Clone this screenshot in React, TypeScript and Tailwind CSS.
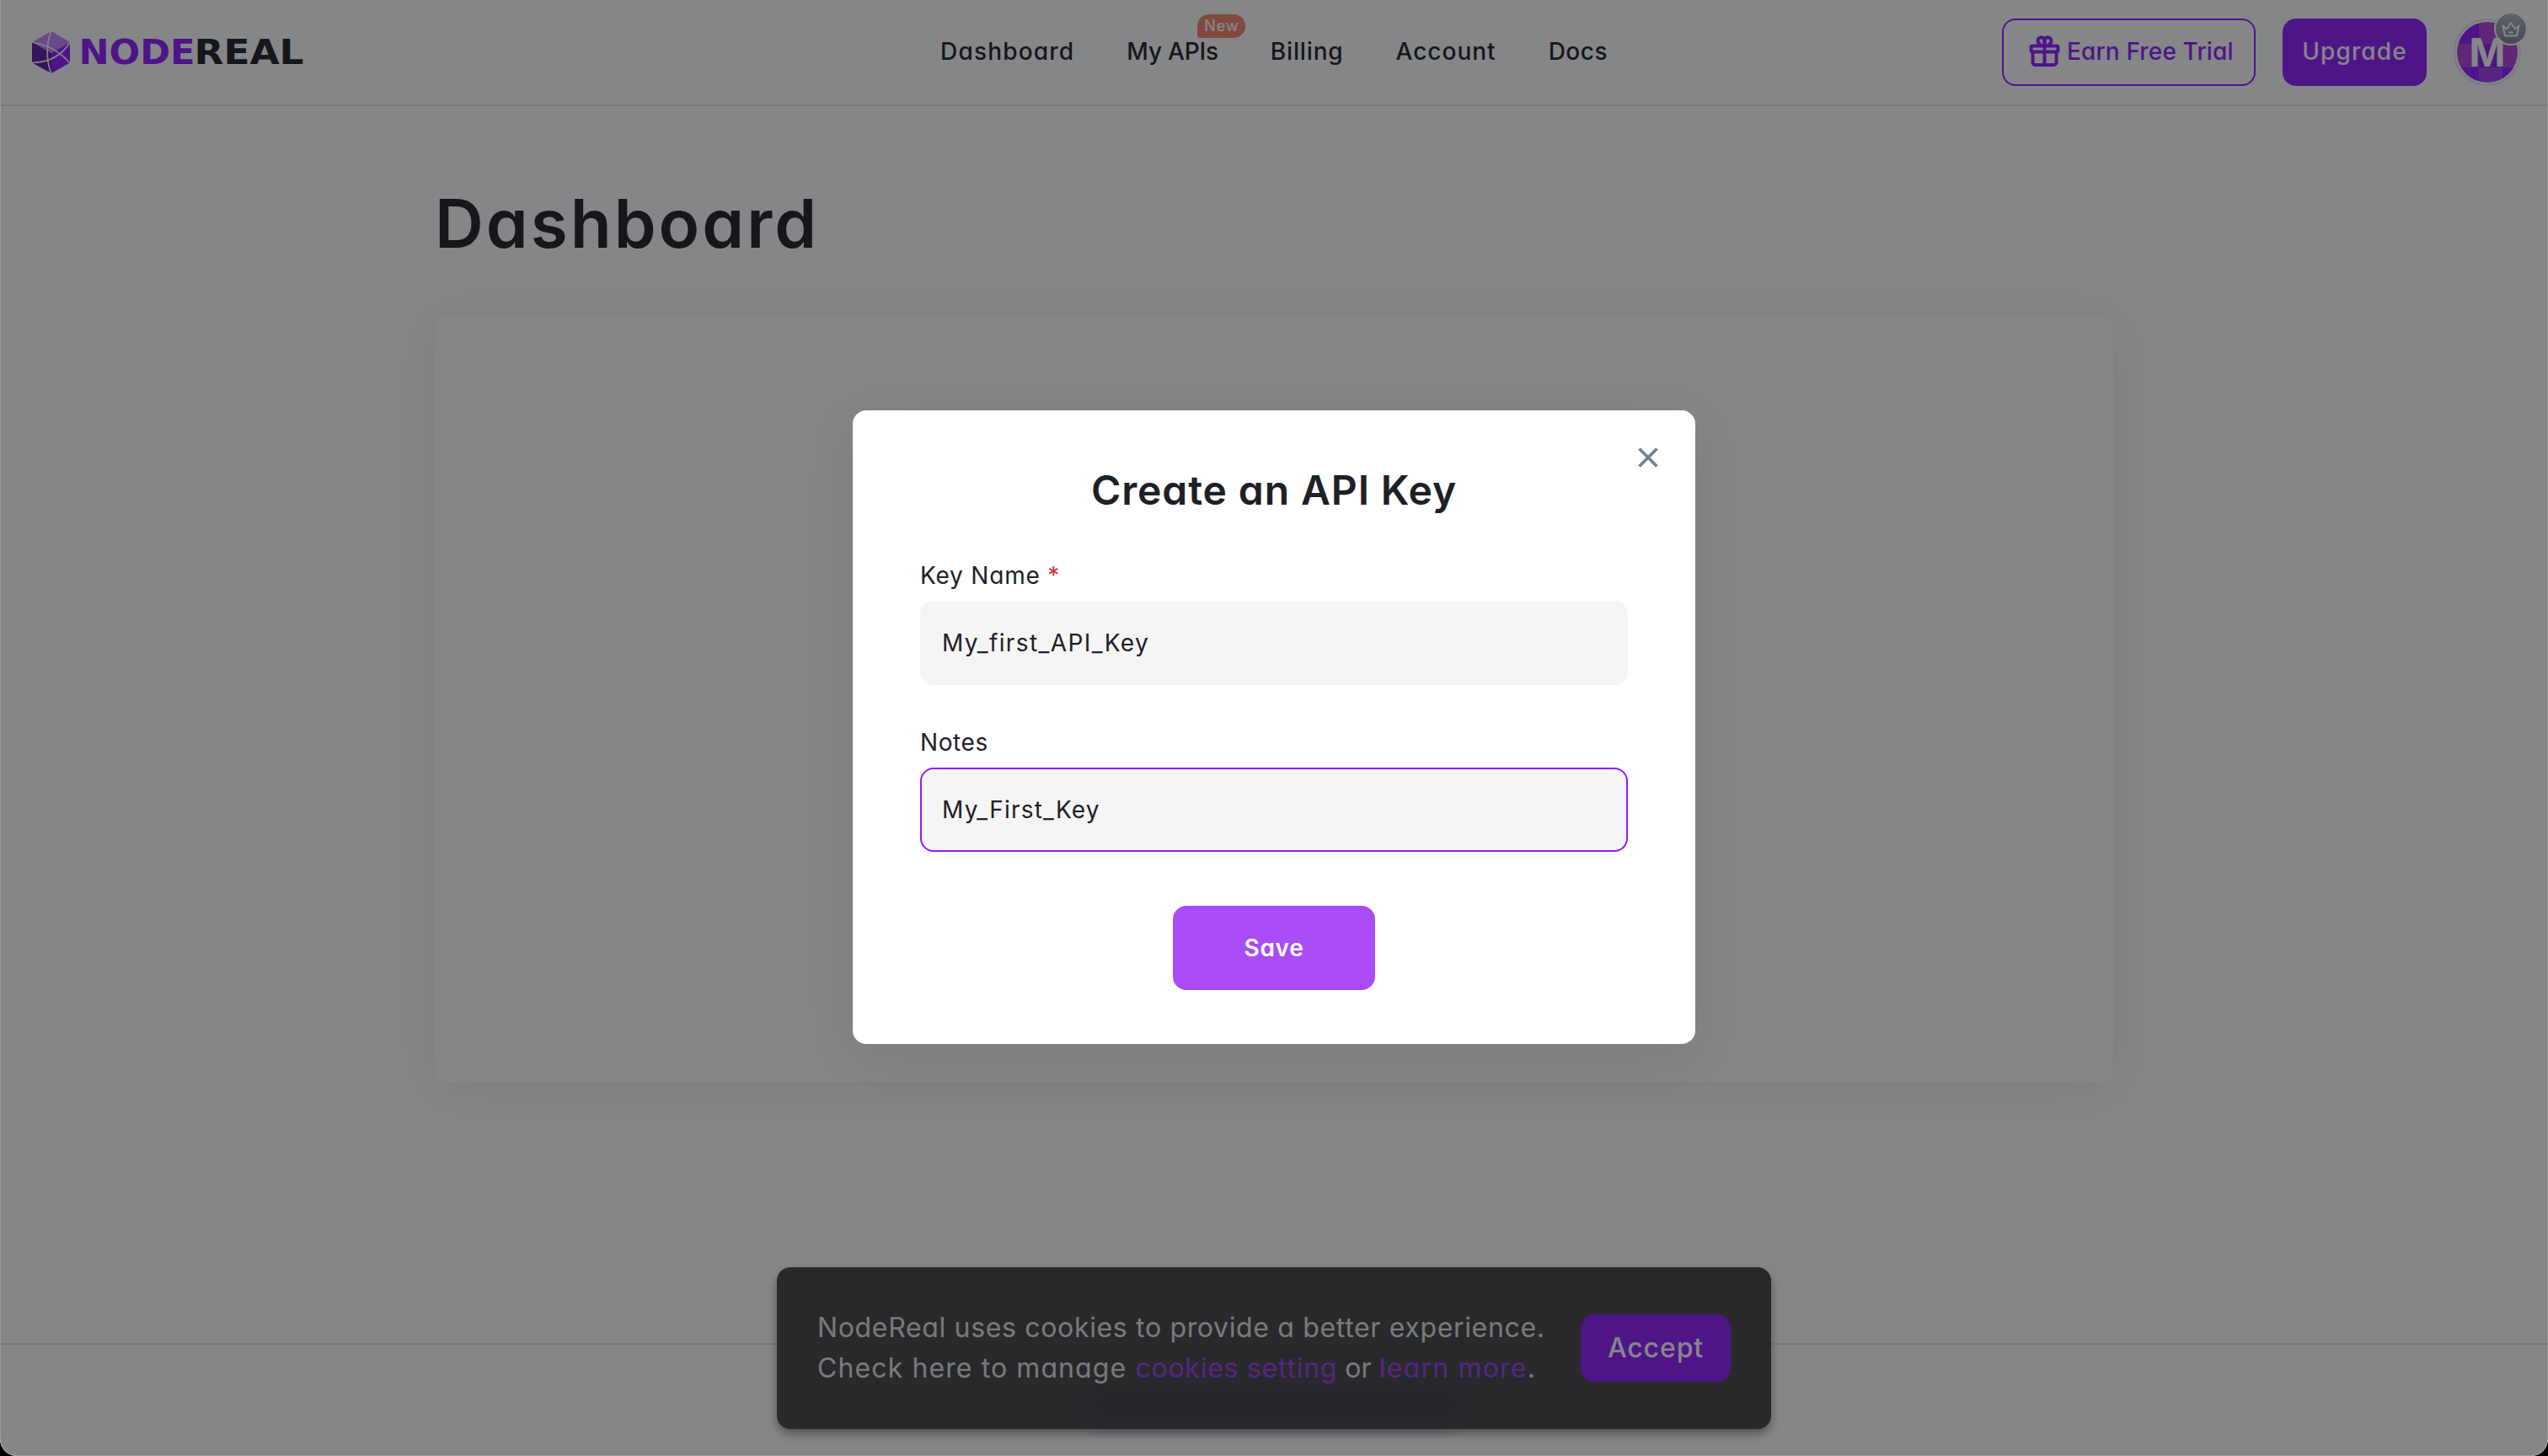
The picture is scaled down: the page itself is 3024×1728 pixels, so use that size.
import React, { useState } from "react";

const navItems = [
  { label: "Dashboard", tracking: "tracking-[1.2px]" },
  { label: "My APIs", tracking: "tracking-[-0.2px]", isNew: true },
  { label: "Billing", tracking: "tracking-[0.85px]" },
  { label: "Account", tracking: "tracking-[1px]" },
  { label: "Docs", tracking: "tracking-[0.5px]" },
];

const tiles = [
  "bg-[#901aff]", "bg-[#b040dd]", "bg-[#901aff]",
  "bg-[#b040dd]", "bg-[#901aff]", "bg-[#b040dd]",
  "bg-[#901aff]", "bg-[#a23ef5]", "bg-[#901aff]",
];

const Logo: React.FC = () => (
  <a href="#" className="ml-[5px] flex items-center">
    <svg className="w-[326px] h-[50px]" viewBox="0 0 326 50" fill="none">
      <path d="M24 0L46 13L24 26L1 13Z" fill="#cd82fb" />
      <path d="M1 13L24 26V50L1 37.5Z" fill="#5f1ba3" />
      <path d="M46 13L24 26V50L46 37.5Z" fill="#901aff" />
      <path d="M23.5 0C18 16 18 34 23.5 50" stroke="white" strokeWidth="1.6" />
      <path d="M1 13C19 16 34 24 46 38" stroke="white" strokeWidth="1.6" />
      <path d="M46 13C36 30 20 37 1 37.5" stroke="white" strokeWidth="1.6" />
      <text x="56.5" y="39" textLength="138" lengthAdjust="spacingAndGlyphs" className="font-['DejaVu_Sans',sans-serif] font-bold text-[41px] fill-[#901aff]">
        NODE
      </text>
      <text x="193.5" y="39" textLength="130" lengthAdjust="spacingAndGlyphs" className="font-['DejaVu_Sans',sans-serif] font-bold text-[41px] fill-[#1e2026]">
        REAL
      </text>
    </svg>
  </a>
);

const GiftIcon: React.FC = () => (
  <svg className="w-10 h-10" viewBox="0 0 40 40" fill="none" stroke="currentColor" strokeWidth="4" strokeLinejoin="round">
    <rect x="3.5" y="13.5" width="32" height="7" rx="2" />
    <path d="M5.5 20.5V33a3 3 0 0 0 3 3h22a3 3 0 0 0 3-3V20.5" />
    <path d="M19.5 13.5V36" />
    <path d="M19.5 13V7.5a4 4 0 1 0-7 2.5c.8 1.5 2 2.5 3 3.5" />
    <path d="M19.5 13V7.5a4 4 0 1 1 7 2.5c-.8 1.5-2 2.5-3 3.5" />
  </svg>
);

const Avatar: React.FC = () => (
  <div className="relative w-20 h-20 rounded-full border-2 border-[#e4e6e8] p-0.5">
    <div className="relative w-[72px] h-[72px] rounded-full overflow-hidden">
      <div className="grid grid-cols-[26px_28px_18px] grid-rows-[26px_28px_18px]">
        {tiles.map((color, i) => (
          <div key={i} className={color} />
        ))}
      </div>
      <span className="absolute inset-0 flex items-center justify-center text-[46px] leading-none font-bold text-white">M</span>
    </div>
    <div className="absolute -top-[10px] -right-[10px] w-10 h-10 rounded-full border-2 border-white bg-linear-to-b from-[#b0b9c6] to-[#7b8797] bg-clip-padding flex items-center justify-center">
      <svg className="w-[22px] h-[19px]" viewBox="0 0 22 19" fill="none" stroke="white" strokeWidth="2" strokeLinejoin="round" strokeLinecap="round">
        <path d="M1.5 5.5L6 9.5L11 2L16 9.5L20.5 5.5L18 17.5H4Z" />
        <path d="M9 13.5h4" />
      </svg>
    </div>
  </div>
);

const Header: React.FC = () => (
  <header className="h-[126px] shrink-0 border-b-2 border-[#e4e6e8] grid grid-cols-[1fr_auto_1fr] items-center px-8">
    <Logo />
    <nav className="flex gap-[62px] pb-0.5 text-[28px] leading-[42px] font-medium">
      {navItems.map((item) => (
        <a key={item.label} href="#" className={`relative whitespace-nowrap ${item.tracking}`}>
          {item.label}
          {item.isNew && (
            <span className="absolute left-[84px] -top-[23px] w-[57px] h-7 rounded-[14px] rounded-bl-[4px] bg-[#f5876d] text-white text-[18px] leading-7 tracking-[0.8px] text-center">
              New
            </span>
          )}
        </a>
      ))}
    </nav>
    <div className="flex items-center justify-end gap-8 text-[28px] font-medium">
      <button className="flex items-center w-[301px] h-20 pl-[29px] pb-0.5 rounded-2xl border-2 border-[#901aff] text-[#901aff] whitespace-nowrap tracking-[0.15px]">
        <GiftIcon />
        <span className="ml-1.5">Earn Free Trial</span>
      </button>
      <button className="w-[171px] h-20 pb-0.5 rounded-2xl bg-[#901aff] text-white tracking-[1.1px]">Upgrade</button>
      <Avatar />
    </div>
  </header>
);

const CookieBanner: React.FC = () => (
  <div className="absolute bottom-8 left-1/2 -translate-x-1/2 w-[1180px] h-48 px-12 rounded-2xl bg-[#454545] shadow-[0_6px_12px_rgba(0,0,0,0.4)] flex items-center justify-between">
    <div className="absolute left-[365px] bottom-3 w-[450px] h-9 rounded-full bg-[#414145] blur-md" />
    <p className="relative text-[32px] leading-[48px] text-[#e6e6e6] whitespace-nowrap">
      <span className="tracking-[0.66px]">NodeReal uses cookies to provide a better experience.</span>
      <br />
      <span className="tracking-[1.1px]">Check here to manage </span>
      <a href="#" className="text-[#a03bf5] tracking-[0.75px]">cookies setting</a>
      <span className="tracking-[0.1px]"> or </span>
      <a href="#" className="text-[#a03bf5] tracking-[1.2px]">learn more</a>.
    </p>
    <button className="w-[178px] h-20 rounded-2xl bg-[#901aff] text-white text-[32px] font-medium tracking-[0.9px]">Accept</button>
  </div>
);

const CreateKeyModal: React.FC = () => {
  const [keyName, setKeyName] = useState("My_first_API_Key");
  const [notes, setNotes] = useState("My_First_Key");

  return (
    <div className="relative w-[1000px] h-[752px] mt-[487px] px-20 pt-[59px] rounded-2xl bg-white shadow-[0_16px_64px_rgba(20,21,26,0.08)] flex flex-col">
      <button className="absolute top-11 right-11 w-6 h-6 text-[#76808f]">
        <svg viewBox="0 0 24 24" fill="none" stroke="currentColor" strokeWidth="3.6">
          <path d="M1.5 1.5L22.5 22.5M22.5 1.5L1.5 22.5" />
        </svg>
      </button>
      <h2 className="text-[48px] leading-[72px] font-semibold tracking-[0.9px] text-center">Create an API Key</h2>

      <label className="mt-[44px] text-[28px] leading-[42px] tracking-[0.8px]">
        Key Name <span className="text-[#cf304a]">*</span>
      </label>
      <input
        value={keyName}
        onChange={(e) => setKeyName(e.target.value)}
        className="mt-[9px] h-[100px] px-6 rounded-2xl border-2 border-transparent bg-[#f5f5f5] text-[28px] tracking-[1.4px] outline-none"
      />

      <label className="mt-[47px] text-[28px] leading-[42px] tracking-[0.6px]">Notes</label>
      <input
        value={notes}
        onChange={(e) => setNotes(e.target.value)}
        className="mt-[9px] h-[100px] px-6 rounded-2xl border-2 border-[#901aff] bg-[#f5f5f5] text-[28px] tracking-[1.2px] outline-none"
      />

      <button className="mt-16 self-center w-60 h-[100px] rounded-2xl bg-[#a94cf7] text-white text-[28px] font-semibold tracking-[0.7px]">
        Save
      </button>
    </div>
  );
};

const App: React.FC = () => {
  return (
    <div className="h-[1728px] bg-black">
      <div className="relative h-full rounded-b-[20px] overflow-hidden bg-white flex flex-col font-['Inter','Noto_Sans',sans-serif] [font-feature-settings:'cv11'] text-[#1e2026]">
        <Header />
        <main className="flex-1 w-[1992px] mx-auto">
          <h1 className="mt-[79px] text-[80px] leading-[120px] font-semibold tracking-[3px]">Dashboard</h1>
          <div className="mt-[49px] h-[910px] rounded-2xl bg-white shadow-[0_8px_64px_rgba(20,21,26,0.08)]" />
        </main>
        <footer className="h-[134px] shrink-0 border-t-2 border-[#e4e6e8]" />
        <CookieBanner />
        <div className="absolute inset-0 bg-[#0b0d11]/50 rounded-b-[20px] border-x border-b border-white/20 flex justify-center items-start">
          <CreateKeyModal />
        </div>
      </div>
    </div>
  );
};

export default App;
